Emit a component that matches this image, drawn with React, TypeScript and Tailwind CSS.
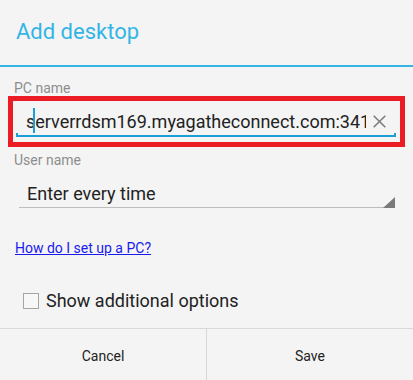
export default function App() {
  return (
    <div className="w-[413px] h-[380px] overflow-hidden bg-[#f4f4f4] flex flex-col font-['Roboto',sans-serif]">
      {/* Title */}
      <div className="h-[65px] pt-[20px] pl-[16px]">
        <h1 className="text-[22px] leading-[24px] text-[#33b5e5]">Add desktop</h1>
      </div>
      <div className="h-[2px] bg-[#33b5e5]" />

      {/* PC name */}
      <div className="mt-[13px] pl-[14px] text-[14px] leading-[16px] text-[#8e8e8e]">PC name</div>
      <div className="mx-[8px] h-[51px] border-[5px] border-[#ec1c24] pt-[7px] pl-[3px] pr-[4px]">
        <div className="flex flex-col">
          <div className="flex h-[25px] items-start pl-[10px] pr-[10px]">
            <div className="relative flex-1 overflow-hidden whitespace-nowrap text-[18px] leading-[27px] text-[#222]">
              serverrdsm169.myagatheconnect.com:3410
              <span className="absolute left-[7px] top-0 h-[25px] w-[2px] bg-[#1a9fd6]" />
            </div>
            <svg className="ml-[7px] mt-[7px] shrink-0" width="13" height="13" viewBox="0 0 13 13">
              <path d="M0.7 0.7 L12.3 12.3 M12.3 0.7 L0.7 12.3" stroke="#7a7a7a" strokeWidth="1.5" />
            </svg>
          </div>
          <div className="h-[4px] border-x-2 border-b-2 border-[#1a9fd6]" />
        </div>
      </div>

      {/* User name */}
      <div className="mt-[5px] pl-[14px] text-[14px] leading-[16px] text-[#8e8e8e]">User name</div>
      <div className="relative ml-[19px] mr-[18px] border-b border-[#bdbdbd] pt-[14px] pb-[1px] pl-[8px]">
        <div className="text-[18px] leading-[24px] text-[#222]">Enter every time</div>
        <svg className="absolute right-0 bottom-[-1px]" width="12" height="11" viewBox="0 0 12 11">
          <polygon points="12,0 12,11 0,11" fill="#7a7a7a" />
        </svg>
      </div>

      {/* Help link */}
      <div className="mt-[32px] pl-[15px] text-[14px] leading-[16px]">
        <a href="#" className="text-[#1a1aee] underline">How do I set up a PC?</a>
      </div>

      {/* Additional options */}
      <label className="mt-[33px] ml-[23px] flex items-center gap-[7px]">
        <span className="h-[16px] w-[16px] border-[1.5px] border-[#a5a5a5] bg-[#f7f7f7]" />
        <span className="text-[18px] leading-[24px] text-[#222]">Show additional options</span>
      </label>

      {/* Buttons */}
      <div className="mt-[15px] flex flex-1 border-t border-[#d8d8d8]">
        <button className="flex-1 pt-[3px] text-[14px] text-[#222]">Cancel</button>
        <div className="w-px bg-[#d8d8d8]" />
        <button className="flex-1 pt-[3px] text-[14px] text-[#222]">Save</button>
      </div>
    </div>
  )
}
